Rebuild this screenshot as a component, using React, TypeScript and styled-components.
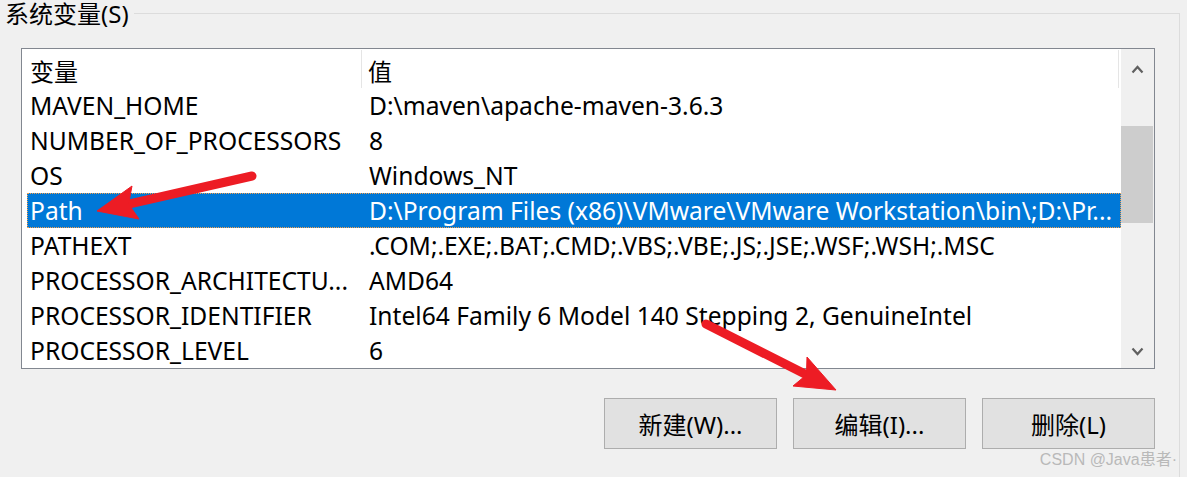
import styled, { createGlobalStyle } from "styled-components";

const GlobalStyle = createGlobalStyle`
  html, body {
    margin: 0;
    padding: 0;
    background: #f0f0f0;
  }
  body {
    font-family: "Noto Sans", "Noto Sans CJK SC", sans-serif;
  }
`;

const Page = styled.div`
  position: relative;
  width: 1187px;
  height: 477px;
  overflow: hidden;
  background: #f0f0f0;
  color: #000;
`;

const Group = styled.fieldset`
  box-sizing: border-box;
  width: 1180px;
  height: 600px;
  margin: 0;
  padding: 0;
  border: 1px solid #dcdcdc;
  border-left: none;
  border-bottom: none;
`;

const Legend = styled.legend`
  padding: 1px 5px 0 5px;
  margin-left: 0;
  font-size: 24px;
  line-height: 26px;
  color: #000;
`;

const ListBox = styled.div`
  display: flex;
  width: 1134px;
  height: 321px;
  box-sizing: border-box;
  margin: 21px 0 0 21px;
  border: 1px solid #828790;
  background: #fff;
`;

const Table = styled.div`
  flex: 1;
  padding-left: 5px;
  display: flex;
  flex-direction: column;
`;

const HeaderRow = styled.div`
  display: grid;
  grid-template-columns: 335px 757px;
  height: 39px;
`;

const HeaderCell = styled.div<{ $pad: number }>`
  display: flex;
  align-items: center;
  padding-left: ${(p) => p.$pad}px;
  padding-top: 3px;
  border-right: 1px solid #e5e5e5;
  margin: 1px 0 0;
  font-size: 24px;
`;

const Row = styled.div<{ $selected?: boolean }>`
  display: grid;
  grid-template-columns: 335px 757px;
  height: 35px;
  box-sizing: border-box;
  align-items: center;
  font-size: 24.6px;
  background: ${(p) => (p.$selected ? "#0078d7" : "transparent")};
  color: ${(p) => (p.$selected ? "#fff" : "#000")};
  border: 1px dotted ${(p) => (p.$selected ? "#f6a04b" : "transparent")};
`;

const Cell = styled.div<{ $pad: number }>`
  padding-left: ${(p) => p.$pad}px;
  white-space: nowrap;
  overflow: hidden;
`;

const ScrollBar = styled.div`
  width: 33px;
  display: flex;
  flex-direction: column;
  background: #f0f0f0;
`;

const ArrowButton = styled.div<{ $h: number }>`
  height: ${(p) => p.$h}px;
  display: flex;
  align-items: center;
  justify-content: center;
`;

const Track = styled.div`
  flex: 1;
`;

const Thumb = styled.div<{ $top: number; $h: number }>`
  margin-top: ${(p) => p.$top}px;
  height: ${(p) => p.$h}px;
  width: 32px;
  background: #cdcdcd;
`;

const Buttons = styled.div`
  display: flex;
  justify-content: flex-end;
  gap: 16px;
  width: 1134px;
  margin: 29px 0 0 21px;
`;

const Button = styled.button`
  width: 173px;
  height: 51px;
  box-sizing: border-box;
  border: 1px solid #adadad;
  background: #e1e1e1;
  font-family: "Noto Sans", "Noto Sans CJK SC", sans-serif;
  font-size: 24px;
  color: #000;
  padding: 0;
`;

const Overlay = styled.svg`
  position: absolute;
  left: 0;
  top: 0;
  pointer-events: none;
`;

const Watermark = styled.div`
  position: absolute;
  right: 10px;
  bottom: 9px;
  font-family: "Liberation Sans", "Noto Sans CJK SC", sans-serif;
  font-size: 16px;
  line-height: 17px;
  color: #b9b9b9;
`;

const rows: [string, string][] = [
  ["MAVEN_HOME", "D:\\maven\\apache-maven-3.6.3"],
  ["NUMBER_OF_PROCESSORS", "8"],
  ["OS", "Windows_NT"],
  ["Path", "D:\\Program Files (x86)\\VMware\\VMware Workstation\\bin\\;D:\\Pr..."],
  ["PATHEXT", ".COM;.EXE;.BAT;.CMD;.VBS;.VBE;.JS;.JSE;.WSF;.WSH;.MSC"],
  ["PROCESSOR_ARCHITECTU...", "AMD64"],
  ["PROCESSOR_IDENTIFIER", "Intel64 Family 6 Model 140 Stepping 2, GenuineIntel"],
  ["PROCESSOR_LEVEL", "6"],
];

const Chevron = ({ up }: { up?: boolean }) => (
  <svg width="13" height="9" viewBox="0 0 13 9">
    <polyline
      points={up ? "1.5,7.5 6.5,2 11.5,7.5" : "1.5,1.5 6.5,7 11.5,1.5"}
      fill="none"
      stroke="#606060"
      strokeWidth="2.2"
    />
  </svg>
);

const Arrow = ({ from, base, tip, w1, w2 }: {
  from: [number, number];
  base: [number, number];
  tip: [number, number];
  w1: [number, number];
  w2: [number, number];
}) => {
  const notch: [number, number] = [
    base[0] + (tip[0] - base[0]) * 0.18,
    base[1] + (tip[1] - base[1]) * 0.18,
  ];
  return (
    <g fill="#ed1c24" stroke="#ed1c24">
      <line x1={from[0]} y1={from[1]} x2={notch[0]} y2={notch[1]} strokeWidth="9" strokeLinecap="round" />
      <polygon points={[tip, w1, notch, w2].map((p) => p.join(",")).join(" ")} strokeWidth="1" strokeLinejoin="round" />
    </g>
  );
};

export default function App() {
  return (
    <Page>
      <GlobalStyle />
      <Group>
        <Legend>系统变量(S)</Legend>
        <ListBox>
          <Table>
            <HeaderRow>
              <HeaderCell $pad={3}>变量</HeaderCell>
              <HeaderCell $pad={6}>值</HeaderCell>
            </HeaderRow>
            {rows.map(([name, value]) => (
              <Row key={name} $selected={name === "Path"}>
                <Cell $pad={2}>{name}</Cell>
                <Cell $pad={6}>{value}</Cell>
              </Row>
            ))}
          </Table>
          <ScrollBar>
            <ArrowButton $h={41}>
              <Chevron up />
            </ArrowButton>
            <Track>
              <Thumb $top={36} $h={97} />
            </Track>
            <ArrowButton $h={33}>
              <Chevron />
            </ArrowButton>
          </ScrollBar>
        </ListBox>
        <Buttons>
          <Button>新建(W)...</Button>
          <Button>编辑(I)...</Button>
          <Button>删除(L)</Button>
        </Buttons>
      </Group>
      <Overlay width="1187" height="477">
        <Arrow from={[252, 176]} base={[135.5, 202.5]} tip={[97, 211]} w1={[132, 186]} w2={[139, 219]} />
        <Arrow from={[706, 324]} base={[800, 371.5]} tip={[836, 390]} w1={[807, 357]} w2={[793, 386]} />
      </Overlay>
      <Watermark>CSDN @Java患者·</Watermark>
    </Page>
  );
}
